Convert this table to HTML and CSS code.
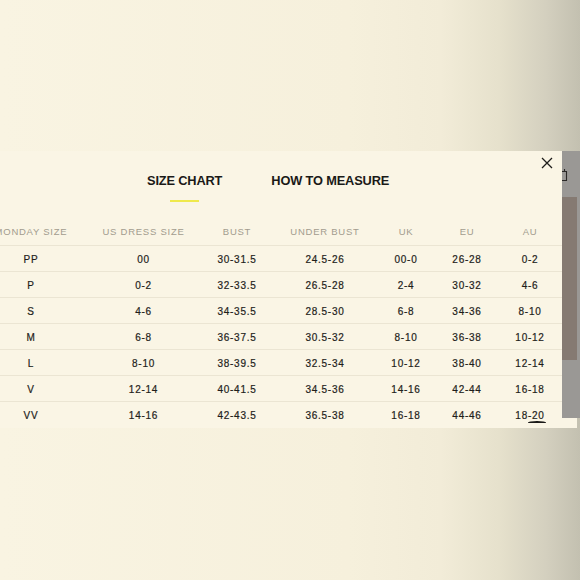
FILE: index.html
```html
<!DOCTYPE html>
<html lang="en">
<head>
<meta charset="utf-8">
<title>Size chart</title>
<link rel="stylesheet" href="styles.css">
</head>
<body>
<div class="page">
  <div class="stage">
    <div class="modal">
      <button class="close" aria-label="Close">
        <svg width="12" height="12" viewBox="0 0 12 12"><path d="M1 1 L11 11 M11 1 L1 11" stroke="#1e1d1a" stroke-width="1.3" fill="none"/></svg>
      </button>
      <div class="tabs">
        <div class="tab active"><span>SIZE CHART</span><i class="bar"></i></div>
        <div class="tab"><span>HOW TO MEASURE</span></div>
      </div>
      <div class="table">
        <div class="row head">
          <div>MONDAY SIZE</div><div>US DRESS SIZE</div><div>BUST</div><div>UNDER BUST</div><div>UK</div><div>EU</div><div>AU</div>
        </div>
        <div class="row"><div>PP</div><div>00</div><div>30-31.5</div><div>24.5-26</div><div>00-0</div><div>26-28</div><div>0-2</div></div>
        <div class="row"><div>P</div><div>0-2</div><div>32-33.5</div><div>26.5-28</div><div>2-4</div><div>30-32</div><div>4-6</div></div>
        <div class="row"><div>S</div><div>4-6</div><div>34-35.5</div><div>28.5-30</div><div>6-8</div><div>34-36</div><div>8-10</div></div>
        <div class="row"><div>M</div><div>6-8</div><div>36-37.5</div><div>30.5-32</div><div>8-10</div><div>36-38</div><div>10-12</div></div>
        <div class="row"><div>L</div><div>8-10</div><div>38-39.5</div><div>32.5-34</div><div>10-12</div><div>38-40</div><div>12-14</div></div>
        <div class="row"><div>V</div><div>12-14</div><div>40-41.5</div><div>34.5-36</div><div>14-16</div><div>42-44</div><div>16-18</div></div>
        <div class="row"><div>VV</div><div>14-16</div><div>42-43.5</div><div>36.5-38</div><div>16-18</div><div>44-46</div><div>18<span class="mark">-20</span></div></div>
      </div>
    </div>
    <div class="behind">
      <svg class="bag" width="6" height="14" viewBox="0 0 6 14"><path d="M0 3.5 H4.5 V12.5 H0 M2.5 1 V3.5" stroke="#2a2826" stroke-width="1.1" fill="none"/></svg>
      <div class="block"></div>
    </div>
  </div>
</div>
</body>
</html>
```
FILE: styles.css
```css
html, body {
  margin: 0;
  padding: 0;
}
body {
  width: 580px;
  height: 580px;
  overflow: hidden;
  background: linear-gradient(to right, #f9f4e2 0%, #f6f0dc 60%, #f2ecd8 76%, #e6e1cc 86%, #d4d0bf 94%, #c3c0b0 100%);
  font-family: "Liberation Sans", Arial, sans-serif;
}
.page {
  padding-top: 151px;
}
.stage {
  position: relative;
  width: 580px;
}
.modal {
  position: relative;
  width: 577px;
  height: 277px;
  background: #faf5e5;
  overflow: hidden;
}
.close {
  position: absolute;
  top: 5px;
  left: 540px;
  width: 14px;
  height: 14px;
  padding: 0;
  border: 0;
  background: none;
  display: flex;
  align-items: center;
  justify-content: center;
}
.tabs {
  display: flex;
  gap: 49px;
  padding: 22px 0 0 147px;
}
.tab {
  display: flex;
  flex-direction: column;
  align-items: center;
  font-size: 12.8px;
  font-weight: 700;
  line-height: 16px;
  color: #1a1917;
  letter-spacing: -0.15px;
}
.bar {
  display: block;
  width: 29px;
  height: 2px;
  margin-top: 11px;
  background: #efe94c;
}
.table {
  margin-top: 15px;
  margin-left: -27px;
  width: 592px;
}
.row {
  display: grid;
  grid-template-columns: 116px 109px 78px 98px 64px 58px 68px;
  height: 26px;
  box-sizing: border-box;
  border-top: 1px solid #ebe5d3;
  align-items: center;
  text-align: center;
  font-size: 10px;
  letter-spacing: 0.75px;
  color: #1f1e1b;
  -webkit-text-stroke: 0.2px #1f1e1b;
  padding-top: 1px;
}
.row.head {
  height: 28px;
  border-top: 0;
  font-size: 9.5px;
  letter-spacing: 0.75px;
  color: #a29c8e;
  -webkit-text-stroke: 0;
  padding-top: 0;
}
.mark {
  position: relative;
}
.mark::after {
  content: "";
  position: absolute;
  left: 0px;
  right: -1px;
  bottom: -3px;
  height: 3px;
  border-radius: 50% 50% 40% 40%;
  border-top: 2px solid #1b1a18;
  box-sizing: border-box;
}
.behind {
  position: absolute;
  left: 562px;
  top: 0;
  width: 18px;
  height: 267px;
  background: #9a9895;
}
.bag {
  position: absolute;
  left: 0;
  top: 17px;
}
.block {
  position: absolute;
  left: 0;
  top: 46px;
  width: 15px;
  height: 163px;
  background: #857a72;
}
```
